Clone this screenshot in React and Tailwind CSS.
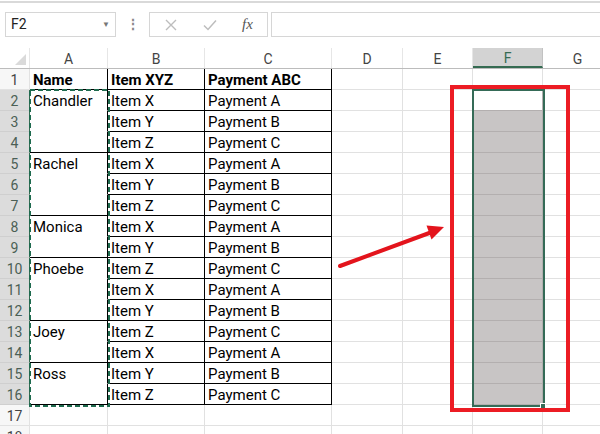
import React from "react";

const COLS = [
  { key: "A", w: "w-[78px]" },
  { key: "B", w: "w-[97px]" },
  { key: "C", w: "w-[127px]" },
  { key: "D", w: "w-[71px]" },
  { key: "E", w: "w-[70px]" },
  { key: "F", w: "w-[70px]" },
  { key: "G", w: "w-[70px]" },
];

const DATA = [
  ["Name", "Item XYZ", "Payment ABC"],
  ["Chandler", "Item X", "Payment A"],
  ["", "Item Y", "Payment B"],
  ["", "Item Z", "Payment C"],
  ["Rachel", "Item X", "Payment A"],
  ["", "Item Y", "Payment B"],
  ["", "Item Z", "Payment C"],
  ["Monica", "Item X", "Payment A"],
  ["", "Item Y", "Payment B"],
  ["Phoebe", "Item Z", "Payment C"],
  ["", "Item X", "Payment A"],
  ["", "Item Y", "Payment B"],
  ["Joey", "Item Z", "Payment C"],
  ["", "Item X", "Payment A"],
  ["Ross", "Item Y", "Payment B"],
  ["", "Item Z", "Payment C"],
];

// rows where column A gets a black bottom line (end of a name group)
const GROUP_END = [1, 4, 7, 9, 12, 14, 16];

function Cell({ row, col }) {
  const inTable = row <= 16 && col < 3;
  const text = inTable ? DATA[row - 1][col] : "";
  const sel = col === 5 && row >= 2 && row <= 16;

  let border = "border-r border-b border-[#e1e1e1]";
  if (inTable) {
    const bottomBlack = col > 0 || GROUP_END.includes(row);
    border = bottomBlack
      ? "border-r border-b border-black"
      : "border-r border-b border-r-black border-b-transparent";
  } else if (sel) {
    border = "border-r border-b border-[#b3afaf]";
  }

  let bg = "bg-white";
  if (sel && row > 2) bg = "bg-[#c8c5c5]";

  return (
    <div
      className={`${COLS[col].w} h-[21px] shrink-0 ${border} ${bg} pl-[3px] pt-[3px] flex items-center text-[15px] leading-none text-black whitespace-nowrap ${
        row === 1 && inTable ? "font-bold" : ""
      }`}
    >
      {text}
    </div>
  );
}

export default function App() {
  const rows = Array.from({ length: 18 }, (_, i) => i + 1);

  return (
    <div
      className="relative w-[600px] h-[434px] overflow-hidden bg-white"
      style={{ fontFamily: "Roboto, 'Liberation Sans', sans-serif" }}
    >
      {/* ribbon edge */}
      <div className="h-[4px] border-t-2 border-[#d9d9d9] mt-[1px]" />

      {/* formula bar */}
      <div className="h-[43px] flex items-start pt-[7px] gap-0">
        <div className="ml-[5px] w-[111px] h-[25px] border border-[#d6d6d6] flex items-center justify-between px-[5px] text-[14px] text-[#222]">
          <span>F2</span>
          <span className="text-[8px] text-[#777]">▼</span>
        </div>
        <div className="w-[33px] h-[25px] flex items-center justify-center text-[#8a8a8a] text-[14px] font-bold">
          ⋮
        </div>
        <div className="w-[119px] h-[25px] border border-[#d6d6d6] flex items-center text-[#b8b8b8]">
          <svg className="ml-[15px]" width="12" height="12" viewBox="0 0 12 12">
            <path d="M1 1 L11 11 M11 1 L1 11" stroke="#bdbdbd" strokeWidth="1.4" />
          </svg>
          <svg className="ml-[26px]" width="14" height="12" viewBox="0 0 14 12">
            <path d="M1 6.5 L5 10.5 L13 1.5" stroke="#bdbdbd" strokeWidth="1.5" fill="none" />
          </svg>
          <span
            className="ml-[25px] text-[15px] italic text-[#555]"
            style={{ fontFamily: "'Liberation Serif', serif" }}
          >
            fx
          </span>
        </div>
        <div className="ml-[3px] flex-1 h-[25px] border border-[#d6d6d6] border-r-0" />
      </div>

      {/* column headers */}
      <div className="flex h-[21px] border-b border-[#bcbcbc]">
        <div className="w-[30px] shrink-0 h-full relative border-r border-[#e6e6e6]">
          <svg className="absolute right-[3px] bottom-[3px]" width="11" height="11" viewBox="0 0 11 11">
            <path d="M11 0 L11 11 L0 11 Z" fill="#dadada" />
          </svg>
        </div>
        {COLS.map((c) => (
          <div
            key={c.key}
            className={`${c.w} shrink-0 h-full pt-[2px] flex items-center justify-center text-[14px] border-r ${
              c.key === "F"
                ? "bg-[#d3d3d3] text-[#356b52] border-[#c2c2c2] border-b-2 border-b-[#356b52]"
                : "text-[#444] border-[#e6e6e6]"
            }`}
          >
            {c.key}
          </div>
        ))}
      </div>

      {/* grid rows */}
      {rows.map((r) => {
        const hl = r >= 2 && r <= 16;
        return (
          <div key={r} className="flex h-[21px]">
            <div
              className={`w-[30px] shrink-0 h-full pt-[2px] flex items-center justify-center text-[14px] border-b border-r ${
                hl
                  ? "bg-[#dcdcdc] text-[#4b5f55] border-b-[#cfcfcf] border-r-[#356b52]"
                  : "bg-[#f7f7f7] text-[#444] border-[#e2e2e2]"
              }`}
            >
              {r}
            </div>
            {COLS.map((c, ci) => (
              <Cell key={c.key} row={r} col={ci} />
            ))}
          </div>
        );
      })}

      {/* selection F2:F16 */}
      <div className="absolute left-[472px] top-[89px] w-[73px] h-[318px] border-2 border-[#356b57]" />
      <div className="absolute left-[540px] top-[403px] w-[6px] h-[6px] bg-[#356b57] border border-white" />

      {/* copy marching ants around A2:A16 */}
      <svg className="absolute left-[29px] top-[89px]" width="81" height="318" viewBox="0 0 81 318">
        <rect
          x="1"
          y="1"
          width="79"
          height="316"
          fill="none"
          stroke="#1f6b4f"
          strokeWidth="2"
          strokeDasharray="5 3"
        />
      </svg>

      {/* red highlight box */}
      <div className="absolute left-[450px] top-[85px] w-[120px] h-[327px] border-4 border-[#ec1c24]" />

      {/* red arrow */}
      <svg className="absolute left-0 top-0" width="600" height="434" viewBox="0 0 600 434">
        <line x1="340" y1="266" x2="432" y2="232" stroke="#e3141c" strokeWidth="4" strokeLinecap="round" />
        <polygon points="444,227 431.5,239.5 426.5,225.5" fill="#e3141c" />
      </svg>
    </div>
  );
}
